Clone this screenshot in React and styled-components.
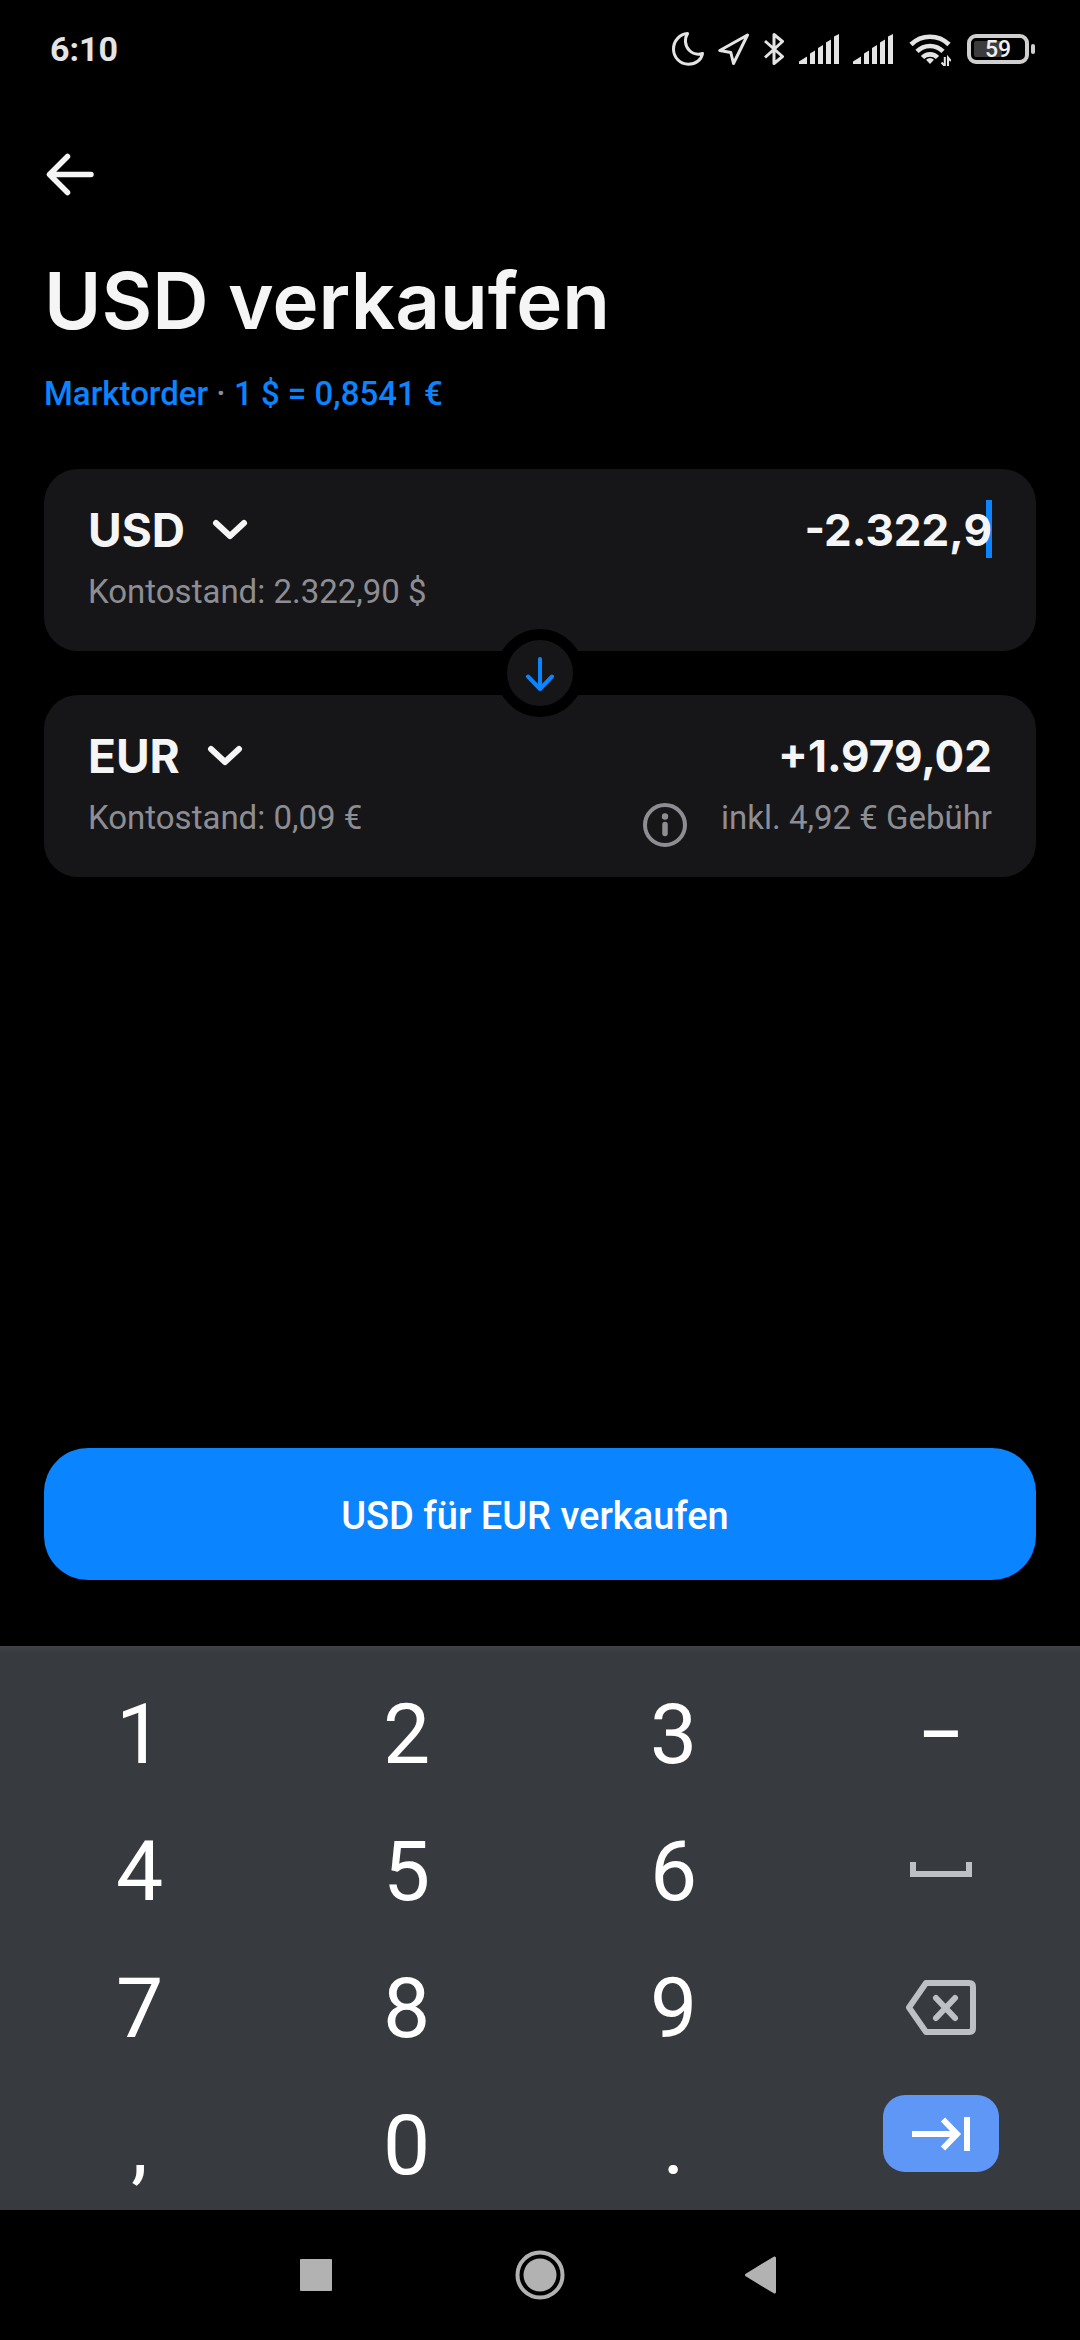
import React from "react";
import styled, { createGlobalStyle } from "styled-components";

const GlobalStyle = createGlobalStyle`
  * {
    box-sizing: border-box;
  }
  body {
    margin: 0;
    background: #000;
    color: #f5f5f5;
    font-family: Roboto, "Liberation Sans", sans-serif;
  }
  button, input, select {
    margin: 0;
    padding: 0;
    border: 0;
    outline: 0;
    background: none;
    color: inherit;
    font: inherit;
  }
  svg {
    display: block;
    flex: none;
  }
`;

const Screen = styled.div`
  display: flex;
  flex-direction: column;
  min-height: 100vh;
`;

const StatusBar = styled.header`
  display: flex;
  align-items: center;
  justify-content: space-between;
  height: 98px;
  padding: 0 45px 0 50px;
  color: #e4e4e4;
`;

const Clock = styled.time`
  font-size: 34px;
  font-weight: 700;
  line-height: 40px;
`;

const StatusIcons = styled.div`
  display: flex;
  align-items: center;
  gap: 14px;
`;

const Main = styled.main`
  display: flex;
  flex: 1;
  flex-direction: column;
  padding: 52px 44px 66px;
`;

const BackButton = styled.button`
  align-self: flex-start;
`;

const Title = styled.h1`
  margin: 55px 0 0;
  font-family: Inter, "Liberation Sans", sans-serif;
  font-size: 78px;
  font-weight: 600;
  line-height: 96px;
`;

const Rate = styled.p`
  margin: 25px 0 55px;
  color: #8d8d93;
  font-size: 33px;
  font-weight: 500;
  line-height: 40px;
`;

const RateLink = styled.a`
  color: #0a84ff;
  text-decoration: none;
`;

const Exchange = styled.section`
  position: relative;
  display: grid;
  gap: 44px;
`;

const Card = styled.div`
  display: grid;
  gap: 14px;
  padding: 31px 44px 39px;
  border-radius: 34px;
  background: #161618;
`;

const CardRow = styled.div`
  display: flex;
  align-items: flex-start;
  justify-content: space-between;
  height: ${props => (props.$main ? "58px" : "40px")};
`;

const Currency = styled.label`
  display: flex;
  align-items: center;
  gap: 26px;
  height: 100%;
  padding-top: 2px;
`;

const CurrencySelect = styled.select`
  appearance: none;
  field-sizing: content;
  font-family: Inter, "Liberation Sans", sans-serif;
  font-size: 46px;
  font-weight: 700;
  line-height: 58px;
`;

const AmountField = styled.div`
  position: relative;
  flex: 1;
`;

const Amount = styled.input`
  position: relative;
  width: 100%;
  height: 58px;
  padding-top: 2px;
  font-family: Inter, "Liberation Sans", sans-serif;
  font-size: 44px;
  font-weight: 700;
  text-align: right;
`;

const Caret = styled.span`
  position: absolute;
  top: 0;
  right: 0;
  width: 6px;
  height: 58px;
  background: #0a84ff;
`;

const Note = styled.span`
  color: #8d8d93;
  font-size: 33px;
  line-height: 40px;
`;

const Fee = styled.div`
  display: flex;
  gap: 34px;
`;

const InfoButton = styled.button`
  padding-top: 5px;
  color: #8d8d93;
`;

const SwapButton = styled.button`
  position: absolute;
  top: 50%;
  left: 50%;
  display: flex;
  align-items: center;
  justify-content: center;
  width: 88px;
  height: 88px;
  border: 11px solid #000;
  border-radius: 50%;
  background: #161618;
  color: #0a84ff;
  transform: translate(-50%, -50%);
`;

const SubmitButton = styled.button`
  height: 132px;
  margin-top: auto;
  padding: 4px 10px 0 0;
  border-radius: 44px;
  background: #0a84ff;
  color: #fff;
  font-size: 38px;
  font-weight: 500;
`;

const Keyboard = styled.div`
  display: grid;
  grid-template-columns: repeat(4, 1fr);
  grid-auto-rows: 101px;
  row-gap: 36px;
  padding: 38px 6px 14px;
  background: linear-gradient(#424348, #373a3e 6px);
`;

const Key = styled.button`
  display: flex;
  align-items: center;
  justify-content: center;
  color: ${props => (props.$muted ? "#bdc1c6" : "#fff")};
  font-size: ${props => (props.$symbol ? "68px" : "84px")};
  font-weight: ${props => (props.$symbol ? 500 : 400)};
  line-height: 100px;
`;

const NextKey = styled.button`
  display: flex;
  align-items: center;
  justify-content: center;
  justify-self: center;
  width: 116px;
  height: 77px;
  border-radius: 22px;
  background: #5f97f6;
  color: #fff;
`;

const NavBar = styled.nav`
  display: flex;
  justify-content: center;
  height: 130px;
  color: #b2b2b2;
`;

const NavButton = styled.button`
  display: flex;
  align-items: center;
  justify-content: center;
  width: 222px;
`;

const MoonIcon = () => (
  <svg width="32" height="34" viewBox="0 0 32 34" fill="none" stroke="currentColor" strokeWidth="3" strokeLinejoin="round">
    <path d="M15.5 1.6C8 2 1.5 8.8 1.5 17C1.5 25.5 8 32.2 16.5 32.2C23.5 32.2 29.5 28 30.5 21.5C27 22.5 21.5 22.5 17.5 18.5C12.5 13.5 12.5 6.5 15.5 1.6Z" />
  </svg>
);

const LocationIcon = () => (
  <svg width="32" height="34" viewBox="0 0 32 34" fill="none" stroke="currentColor" strokeWidth="3" strokeLinejoin="round">
    <path d="M29.5 3L1.8 18.5L12.8 20.5L15.5 31.5Z" />
  </svg>
);

const BluetoothIcon = () => (
  <svg width="21" height="34" viewBox="0 0 21 34" fill="none" stroke="currentColor" strokeWidth="3" strokeLinejoin="round">
    <path d="M1 9L18.5 24.5L10 31.5V2.5L18.5 9.5L1 25.5" />
  </svg>
);

const SignalIcon = () => (
  <svg width="40" height="30" viewBox="0 0 40 30" fill="currentColor">
    <path d="M0 30V27.5L8 22.5V30ZM11 30V19.5L16 16.5V30ZM19 30V14L24 11V30ZM27 30V8.5L32 5.5V30ZM35 30V2.5L40 0V30Z" />
  </svg>
);

const WifiIcon = () => (
  <svg width="44" height="34" viewBox="0 0 44 34" fill="none" stroke="currentColor" strokeWidth="4.6">
    <path d="M4 12.5A27 27 0 0 1 42 12.5" />
    <path d="M10 19.3A18.5 18.5 0 0 1 36 19.3" />
    <path d="M15.5 25.5A10.5 10.5 0 0 1 30.5 25.5" />
    <path d="M19 27.7Q23 24.5 27 27.7L23 32Z" fill="currentColor" stroke="none" />
    <path d="M32 24.5H44V34H32Z" fill="#000" stroke="none" />
    <path d="M37.8 25V34L34.5 30.5M41 34V25.5L44 29" strokeWidth="2" />
  </svg>
);

// battery keeps its charge as text so the level stays readable
const BatteryIcon = ({ level }) => (
  <svg width="70" height="30" viewBox="0 0 70 30" fill="none">
    <rect x="4" y="2" width="58" height="26" rx="7" stroke="#cfcfcf" strokeWidth="4" />
    <rect x="9" y="7" width="28" height="16" rx="2" fill="#3c3c3c" />
    <rect x="66" y="10" width="4" height="10" rx="2" fill="#cfcfcf" />
    <text x="33" y="23" textAnchor="middle" fill="#f0f0f0" fontSize="23" fontWeight="500">
      {level}
    </text>
  </svg>
);

const BackIcon = () => (
  <svg width="52" height="48" viewBox="0 0 52 48" fill="none" stroke="currentColor" strokeWidth="5.5" strokeLinecap="round" strokeLinejoin="round">
    <path d="M47 24.5H6M23.5 6.5L5.5 24.5L23.5 42.5" />
  </svg>
);

const ChevronIcon = () => (
  <svg width="38" height="24" viewBox="0 0 38 24" fill="none" stroke="currentColor" strokeWidth="6" strokeLinecap="round" strokeLinejoin="round">
    <path d="M5 5L19 18L33 5" />
  </svg>
);

const ArrowDownIcon = () => (
  <svg width="32" height="36" viewBox="0 0 32 36" fill="none" stroke="currentColor" strokeWidth="4" strokeLinecap="round" strokeLinejoin="round">
    <path d="M16 4V33M4 21.5L16 34L28 21.5" />
  </svg>
);

const InfoIcon = () => (
  <svg width="44" height="44" viewBox="0 0 44 44" fill="none" stroke="currentColor">
    <circle cx="22" cy="22" r="20" strokeWidth="4" />
    <circle cx="22" cy="13.5" r="3.2" fill="currentColor" stroke="none" />
    <path d="M22 21.5V30.5" strokeWidth="5.5" strokeLinecap="round" />
  </svg>
);

const SpaceIcon = () => (
  <svg width="62" height="20" viewBox="0 0 62 20" fill="none" stroke="currentColor" strokeWidth="6">
    <path d="M3 0V12H59V0" />
  </svg>
);

const BackspaceIcon = () => (
  <svg width="70" height="58" viewBox="0 0 70 58" fill="none" stroke="currentColor" strokeWidth="6" strokeLinejoin="round">
    <path d="M20 3H63Q67 3 67 7V48Q67 52 63 52H20L3 27.5Z" />
    <path d="M30 18L49 38M49 18L30 38" strokeLinecap="round" />
  </svg>
);

const NextIcon = () => (
  <svg width="58" height="34" viewBox="0 0 58 34" fill="none" stroke="currentColor" strokeWidth="6">
    <path d="M0 17H45M31 2.5L45 17L31 31.5M55 0V34" />
  </svg>
);

const keys = [
  "1", "2", "3", "–",
  "4", "5", "6", "space",
  "7", "8", "9", "backspace",
  ",", "0", ".", "next",
];

const currencies = ["USD", "EUR"];

function CurrencyPicker({ label, value }) {
  return (
    <Currency>
      <CurrencySelect aria-label={label} defaultValue={value}>
        {currencies.map(currency => (
          <option key={currency}>{currency}</option>
        ))}
      </CurrencySelect>
      <ChevronIcon />
    </Currency>
  );
}

function KeyboardKey({ name }) {
  if (name === "next") {
    return (
      <NextKey type="button" aria-label="Weiter">
        <NextIcon />
      </NextKey>
    );
  }
  if (name === "space") {
    return (
      <Key type="button" $muted aria-label="Leerzeichen">
        <SpaceIcon />
      </Key>
    );
  }
  if (name === "backspace") {
    return (
      <Key type="button" $muted aria-label="Löschen">
        <BackspaceIcon />
      </Key>
    );
  }
  return (
    <Key type="button" $symbol={name === "–"}>
      {name}
    </Key>
  );
}

export default function App() {
  return (
    <Screen>
      <GlobalStyle />
      <StatusBar>
        <Clock>6:10</Clock>
        <StatusIcons>
          <MoonIcon />
          <LocationIcon />
          <BluetoothIcon />
          <SignalIcon />
          <SignalIcon />
          <WifiIcon />
          <BatteryIcon level={59} />
        </StatusIcons>
      </StatusBar>
      <Main>
        <BackButton type="button" aria-label="Zurück">
          <BackIcon />
        </BackButton>
        <Title>USD verkaufen</Title>
        <Rate>
          <RateLink href="#order">Marktorder</RateLink> ·{" "}
          <RateLink href="#rate">1 $ = 0,8541 €</RateLink>
        </Rate>
        <Exchange>
          <Card>
            <CardRow $main>
              <CurrencyPicker label="Von" value="USD" />
              <AmountField>
                <Caret />
                <Amount aria-label="Betrag USD" inputMode="decimal" defaultValue="-2.322,9" />
              </AmountField>
            </CardRow>
            <CardRow>
              <Note>Kontostand: 2.322,90 $</Note>
            </CardRow>
          </Card>
          <Card>
            <CardRow $main>
              <CurrencyPicker label="Nach" value="EUR" />
              <AmountField>
                <Amount aria-label="Betrag EUR" inputMode="decimal" defaultValue="+1.979,02" />
              </AmountField>
            </CardRow>
            <CardRow>
              <Note>Kontostand: 0,09 €</Note>
              <Fee>
                <InfoButton type="button" aria-label="Gebühreninfo">
                  <InfoIcon />
                </InfoButton>
                <Note>inkl. 4,92 € Gebühr</Note>
              </Fee>
            </CardRow>
          </Card>
          <SwapButton type="button" aria-label="Richtung wechseln">
            <ArrowDownIcon />
          </SwapButton>
        </Exchange>
        <SubmitButton type="button">USD für EUR verkaufen</SubmitButton>
      </Main>
      <Keyboard>
        {keys.map(name => (
          <KeyboardKey key={name} name={name} />
        ))}
      </Keyboard>
      <NavBar>
        <NavButton type="button" aria-label="Übersicht">
          <svg width="36" height="36" viewBox="0 0 36 36" fill="currentColor">
            <rect x="0" y="2" width="32" height="32" rx="1" />
          </svg>
        </NavButton>
        <NavButton type="button" aria-label="Startseite">
          <svg width="50" height="50" viewBox="0 0 50 50" fill="none">
            <circle cx="25" cy="25" r="22.5" stroke="currentColor" strokeWidth="4" />
            <circle cx="25" cy="25" r="16.5" fill="currentColor" />
          </svg>
        </NavButton>
        <NavButton type="button" aria-label="Zurück">
          <svg width="36" height="38" viewBox="0 0 36 38" fill="currentColor" stroke="currentColor" strokeWidth="3" strokeLinejoin="round">
            <path d="M2.5 19L30.5 2V36Z" />
          </svg>
        </NavButton>
      </NavBar>
    </Screen>
  );
}
